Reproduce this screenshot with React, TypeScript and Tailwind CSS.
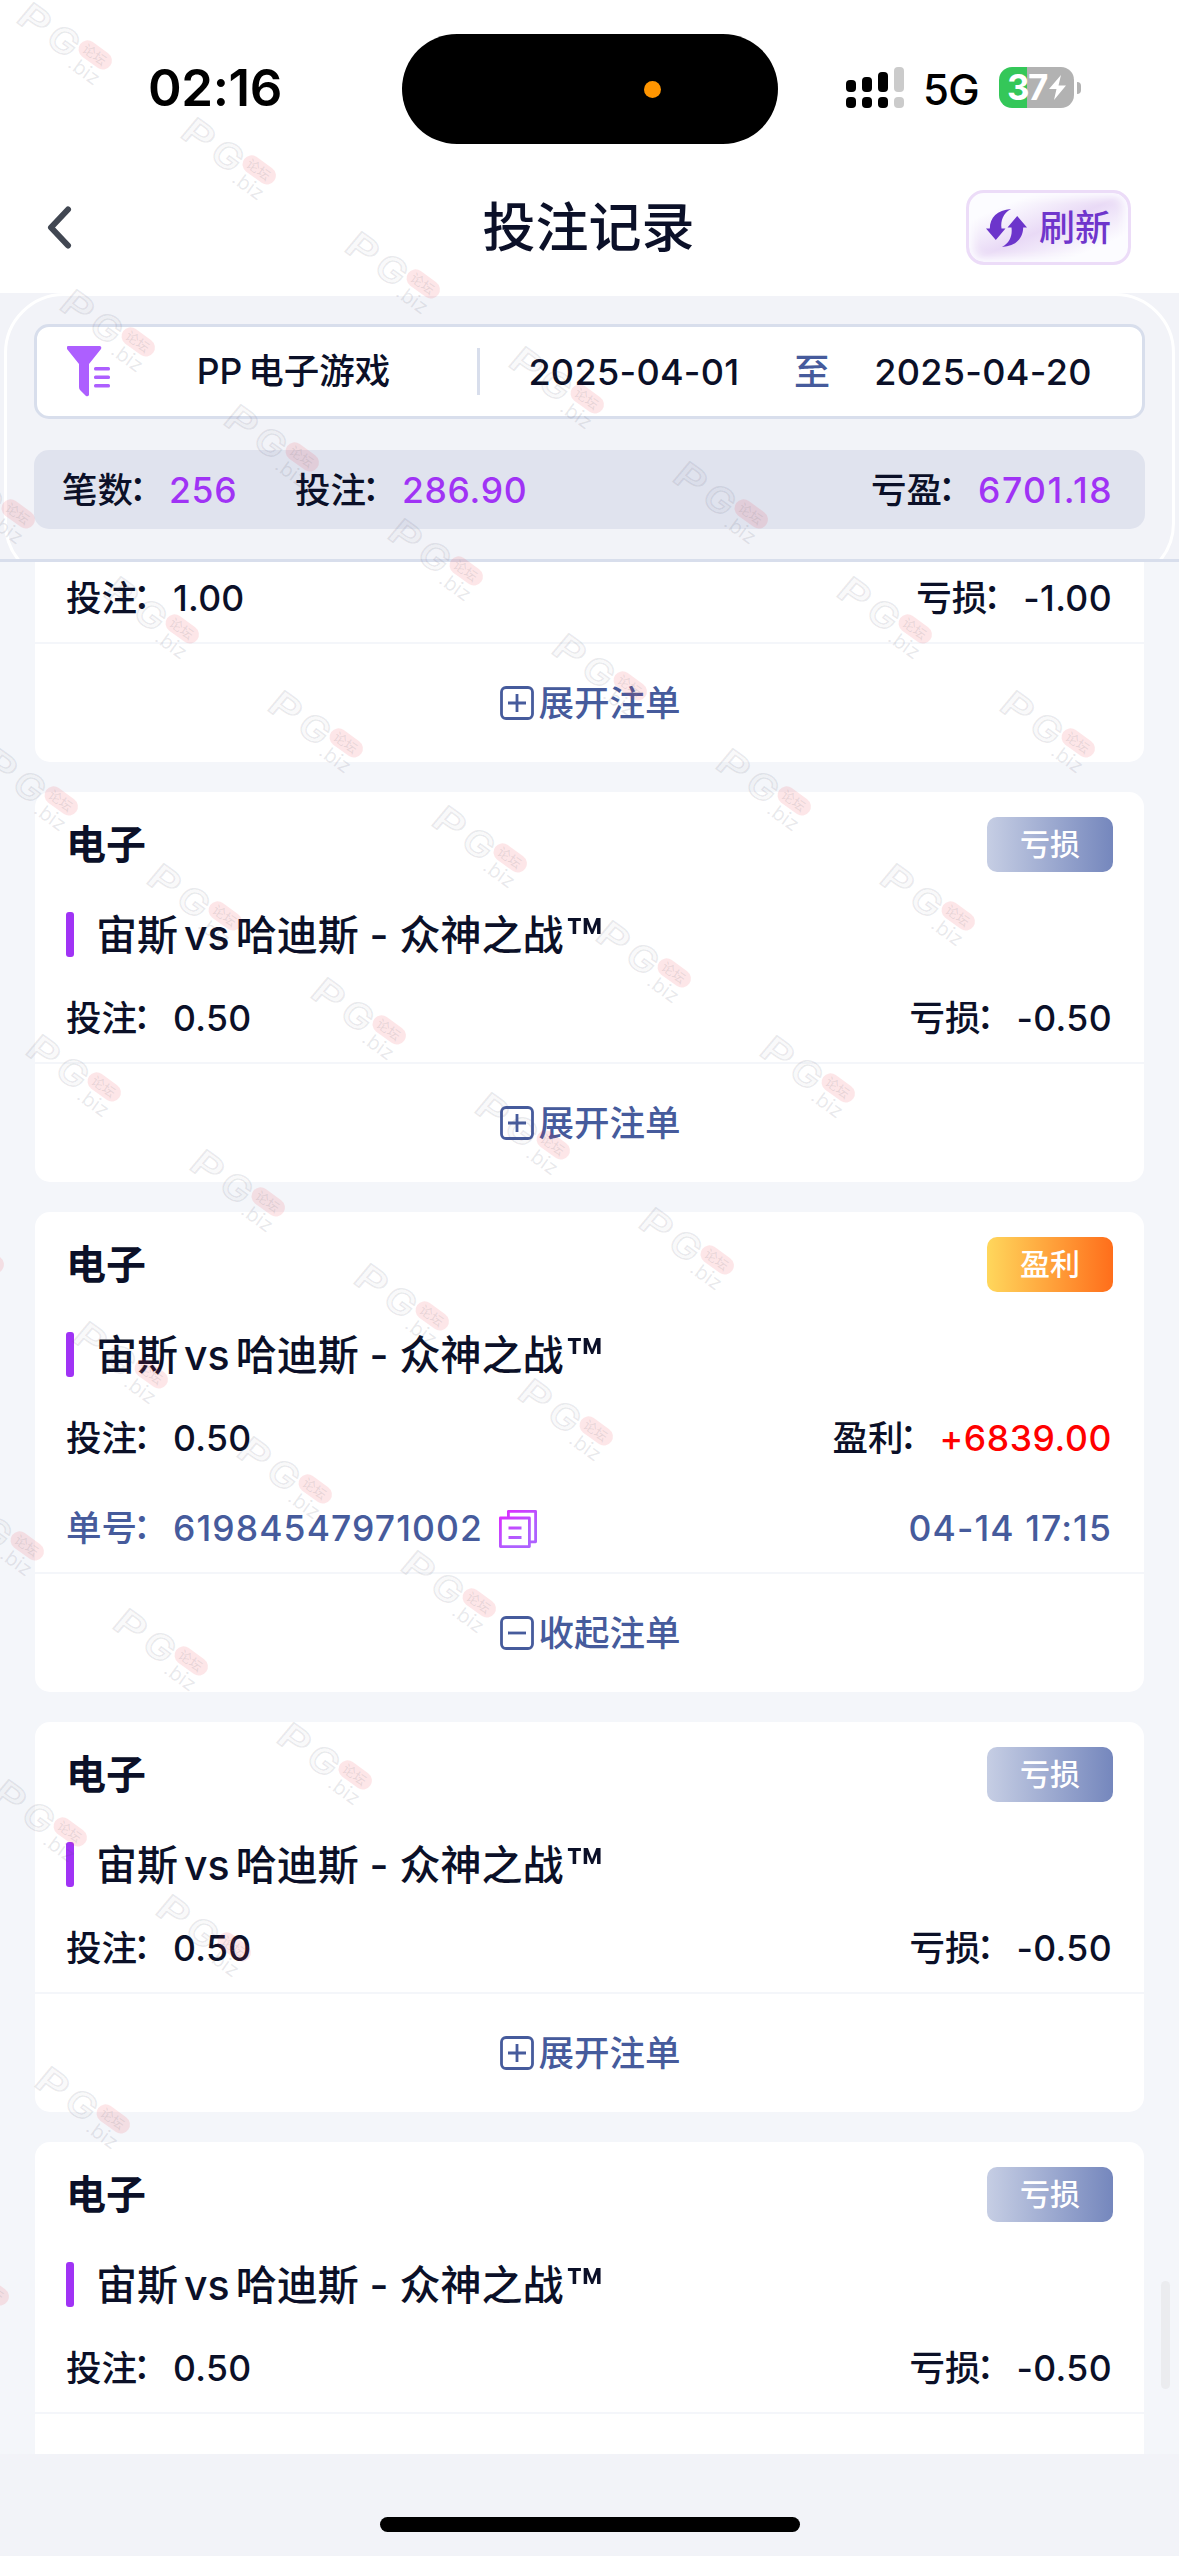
import React from "react";

const FONT = "font-['Inter','Noto_Sans_CJK_SC',sans-serif]";

const STAMPS: [number, number, number][] = [
  [17, 5, 7],
  [60, 292, 6],
  [-60, 464, 6],
  [-17, 751, 5],
  [26, 1037, 4],
  [-91, 1209, 1],
  [73, 1324, 3],
  [-51, 1496, 3],
  [-8, 1782, 2],
  [35, 2069, 1],
  [-86, 2241, 1],
];

function Stamp({ x, y }: { x: number; y: number }) {
  return (
    <svg className="absolute overflow-visible" style={{ left: x, top: y }} width="96" height="78" viewBox="0 0 96 78">
      <g transform="translate(2 23) rotate(36)">
        <g fontSize="36" fontWeight="600" fill="#5a5a70" fillOpacity="0.03" stroke="#5a5a70" strokeOpacity="0.13" strokeWidth="1.4">
          <text transform="translate(-8 -3) skewX(-4) scale(1.3 1)" x="0" y="0">
            P
          </text>
          <text transform="translate(28 -3) skewX(-4) scale(1.1 1)" x="0" y="0">
            G
          </text>
        </g>
        <text x="61" y="3" fontSize="20" fontWeight="400" fill="#55556a" fillOpacity="0.13">
          .biz
        </text>
        <rect x="59" y="-32" width="37" height="18" rx="9" fill="#f03040" fillOpacity="0.12" />
        <text x="64" y="-18" fontSize="13" fill="#8a8a90" fillOpacity="0.2">
          论坛
        </text>
      </g>
    </svg>
  );
}

function Watermark() {
  return (
    <div className="pointer-events-none absolute inset-0 overflow-hidden">
      {STAMPS.flatMap(([x, y, n]) =>
        Array.from({ length: n }, (_, i) => <Stamp key={`${x}-${y}-${i}`} x={x + i * 163.9} y={y + i * 114.7} />)
      )}
    </div>
  );
}

function Label({ text }: { text: string }) {
  return (
    <span className="flex w-[107px] shrink-0">
      {text}
      <span className="w-[36px] -translate-x-[4px] -translate-y-[2px]">：</span>
    </span>
  );
}

function StatusBar() {
  const tops = [
    { h: "h-[12px]", c: "bg-black" },
    { h: "h-[15px]", c: "bg-black" },
    { h: "h-[20px]", c: "bg-black" },
    { h: "h-[25px]", c: "bg-[#cbcbcb]" },
  ];
  return (
    <div className="flex h-[178px] items-start">
      <div className="flex h-[178px] w-[402px] justify-center pl-[28px] pt-[55px] text-[51px] font-semibold leading-[66px] tracking-[-0.4px] text-black">02:16</div>
      <div className="mt-[34px] flex h-[110px] w-[376px] items-center rounded-full bg-black pl-[242px]">
        <span className="size-[17px] rounded-full bg-[#ff9500]" />
      </div>
      <div className="mt-[67px] flex h-[41px] items-center pl-[68px]">
        <div className="flex items-end gap-[6px]">
          {tops.map((b, i) => (
            <div key={i} className="flex flex-col gap-[5px]">
              <span className={`w-[10px] rounded-[4px] ${b.h} ${b.c}`} />
              <span className={`h-[11px] w-[10px] rounded-[4px] ${b.c}`} />
            </div>
          ))}
        </div>
        <span className="ml-[19px] mt-[4px] w-[76px] text-[42px] font-[450] leading-[42px] tracking-[-0.8px] text-black">5G</span>
        <div className="flex h-[41px] w-[75px] items-center justify-center rounded-[13px] bg-[linear-gradient(90deg,#34c759_28px,#b2b2b2_28px)] text-[35px] font-bold leading-[41px] text-white">
          <span className="tracking-[-1.5px]">37</span>
          <svg className="ml-[2px]" width="17" height="25" viewBox="0 0 17 25" fill="#fff">
            <path d="M12 0 L0 14 H7.5 L5 25 L17 10.500 H9.500 Z" />
          </svg>
        </div>
        <span className="ml-[3px] h-[12px] w-[4px] rounded-r-full bg-[#b2b2b2]" />
      </div>
    </div>
  );
}

function Header() {
  return (
    <div className="grid h-[115px] grid-cols-[1fr_auto_1fr] items-start pl-[46px] pr-[48px]">
      <svg className="ml-[1px] mt-[28px]" width="25" height="43" viewBox="0 0 25 43" fill="none" stroke="#414752" strokeWidth="6" strokeLinecap="round" strokeLinejoin="round">
        <path d="M21 3.500 L4 21.500 L21 39.500" />
      </svg>
      <h1 className="mt-[15px] text-[53px] font-medium leading-[70px] text-[#0b1028]">投注记录</h1>
      <button className="mt-[12px] flex h-[75px] w-[165px] items-center justify-self-end rounded-[18px] border-[3px] border-[#ecdcf8] bg-[linear-gradient(to_bottom_right,#fcfcff_20%,#e9daf6_50%,#fcfcff_80%)] pl-[17px] text-[36px] font-medium text-[#6f35cc] shadow-[inset_0_0_9px_4px_#fcfcff]">
        <svg width="41" height="38" viewBox="0 0 41 43" preserveAspectRatio="none" fill="#6c35cb">
          <path d="M25 0 C11 1 4 10 3.800 22 L0 22 L9.800 35 L19.500 22 L15.500 22 C14.500 13 17 5 25 0Z" />
          <path d="M16 43 C30 42 37 33 37.200 21 L41 21 L31.200 8 L21.500 21 L25.500 21 C26.500 30 24 38 16 43Z" />
        </svg>
        <span className="ml-[12px] leading-[60px]">刷新</span>
      </button>
    </div>
  );
}

function FilterPanel() {
  return (
    <div className="h-[269px] overflow-hidden border-b-[3px] border-[#d8deec] bg-[#f2f3f8] px-[4px]">
      <div className="h-[290px] rounded-[60px] border-[3px] border-white px-[27px] pt-[28px]">
        <div className="flex h-[95px] items-center rounded-[15px] border-[3px] border-[#d8deec] bg-white pl-[30px] text-[36px] font-[450] text-[#0b1028]">
          <svg width="43" height="51" viewBox="0 0 43 51" fill="#ad5fff">
            <path d="M1 0 H33 Q35 1 34 3 L22 18 V49 Q21 51 19 50 L13 44 Q12 43 12 41 V18 L0 3 Q-1 1 1 0Z" />
            <rect x="27" y="21" width="16" height="3.500" rx="1.500" />
            <rect x="27" y="29.500" width="16" height="3.500" rx="1.500" />
            <rect x="27" y="38" width="16" height="3.500" rx="1.500" />
          </svg>
          <span className="w-[367px] text-center text-[35.500px]">
            PP<span className="ml-[6px]">电子游戏</span>
          </span>
          <span className="h-[47px] w-[3px] bg-[#d8deec]" />
          <span className="w-[308px] text-center tracking-[0.300px]">2025-04-01</span>
          <span className="w-[48px] text-center text-[#465b9c]">至</span>
          <span className="w-[294px] text-center tracking-[0.300px]">2025-04-20</span>
        </div>
        <div className="mt-[31px] flex h-[79px] items-center rounded-[15px] bg-[#e0e3ee] pl-[28px] pr-[32px] pt-[2px] text-[35.500px] font-[450] text-[#0b1028]">
          <Label text="笔数" />
          <span className="w-[126px] tracking-[0.700px] text-[#a033f5]">256</span>
          <Label text="投注" />
          <span className="flex-1 tracking-[0.700px] text-[#a033f5]">286.90</span>
          <Label text="亏盈" />
          <span className="tracking-[1.500px] text-[#a033f5]">6701.18</span>
        </div>
      </div>
    </div>
  );
}

function ToggleIcon({ open }: { open?: boolean }) {
  return (
    <svg width="34" height="34" viewBox="0 0 34 34" fill="none" stroke="#465b9c" strokeWidth="2.800">
      <rect x="1.500" y="1.500" width="31" height="31" rx="4.500" />
      <path d={open ? "M8 17 H26" : "M8 17 H26 M17 8 V26"} />
    </svg>
  );
}

function CopyIcon() {
  return (
    <svg width="38" height="38" viewBox="0 0 38 38" fill="none" stroke="url(#copyFill)" strokeWidth="2.800" strokeLinejoin="round">
      <defs>
        <linearGradient id="copyFill" gradientUnits="userSpaceOnUse" x1="4" y1="2" x2="24" y2="26">
          <stop offset="0" stopColor="#dd2bff" />
          <stop offset="1" stopColor="#ae60ff" />
        </linearGradient>
      </defs>
      <path d="M9.400 8 V1.400 H36.600 V31.800 H31" />
      <rect x="1.400" y="8" width="29" height="28.600" />
      <path d="M9.500 18 H22.500 M9.500 27.500 H22.500" />
    </svg>
  );
}

interface Bet {
  bet: string;
  win?: boolean;
  amount: string;
  order?: string;
  time?: string;
}

function Card({ item }: { item: Bet }) {
  const { bet, win, amount, order, time } = item;
  return (
    <div className="shrink-0 rounded-[15px] bg-white text-[35.500px] font-[450] text-[#0b1028]">
      <div className={`border-b-[2px] border-[#f4f6fa] pl-[31px] pr-[32px] ${order ? "h-[362px]" : "h-[272px]"}`}>
        <div className="-mr-[1px] flex h-[105px] items-center justify-between">
          <span className="text-[40px] font-bold">电子</span>
          <span
            className={`flex h-[55px] w-[126px] items-center justify-center rounded-[10px] text-[30px] font-medium text-white ${
              win ? "bg-[linear-gradient(90deg,#ffd75c,#ff6e1b)]" : "bg-[linear-gradient(90deg,#c6cee4,#7587bd)]"
            }`}
          >
            {win ? "盈利" : "亏损"}
          </span>
        </div>
        <div className="mt-[15px] flex h-[45px] items-center text-[41px]">
          <span className="h-[45px] w-[8px] rounded-[3px] bg-[#a033f5]" />
          <span className="ml-[22px] mt-[2px] whitespace-pre">
            宙斯<span className="mx-[6px] font-medium">vs</span>哈迪斯<span className="font-medium"> - </span>众神之战
            <span className="ml-[2px] inline-block translate-y-[12px] text-[60px] font-semibold leading-[0]">™</span>
          </span>
        </div>
        <div className="mt-[39px] flex h-[45px] items-center">
          <Label text="投注" />
          <span className="flex-1 tracking-[0.300px]">{bet}</span>
          <Label text={win ? "盈利" : "亏损"} />
          <span className={win ? "tracking-[0.600px] text-[#ff0000]" : "tracking-[0.400px]"}>{amount}</span>
        </div>
        {order && (
          <div className="mt-[45px] flex h-[45px] items-center text-[#465b9c]">
            <Label text="单号" />
            <span className="mr-[18px] w-[308px] tracking-[1.100px]">{order}</span>
            <CopyIcon />
            <span className="ml-auto tracking-[1.100px]">{time}</span>
          </div>
        )}
      </div>
      <div className="flex h-[118px] items-center justify-center gap-[4px] pl-[2px] text-[#465b9c]">
        <ToggleIcon open={!!order} />
        <span className="mt-[1px]">{order ? "收起注单" : "展开注单"}</span>
      </div>
    </div>
  );
}

const BETS: Bet[] = [
  { bet: "1.00", amount: "-1.00" },
  { bet: "0.50", amount: "-0.50" },
  { bet: "0.50", win: true, amount: "+6839.00", order: "61984547971002", time: "04-14 17:15" },
  { bet: "0.50", amount: "-0.50" },
  { bet: "0.50", amount: "-0.50" },
];

export default function App() {
  return (
    <div lang="zh-CN" className={`relative h-[2556px] w-[1179px] overflow-hidden bg-white ${FONT}`}>
      <StatusBar />
      <Header />
      <FilterPanel />
      <div className="relative h-[1892px] overflow-hidden bg-[#f4f6fa] px-[35px]">
        <div className="-mt-[190px] flex flex-col gap-[30px]">
          {BETS.map((b, i) => (
            <Card key={i} item={b} />
          ))}
        </div>
        <span className="absolute right-[9px] top-[1719px] h-[108px] w-[9px] rounded-full bg-[#ebecef]" />
      </div>
      <div className="flex h-[102px] justify-center bg-[#f2f3f8] pt-[63px]">
        <span className="h-[15px] w-[420px] rounded-full bg-black" />
      </div>
      <Watermark />
    </div>
  );
}
